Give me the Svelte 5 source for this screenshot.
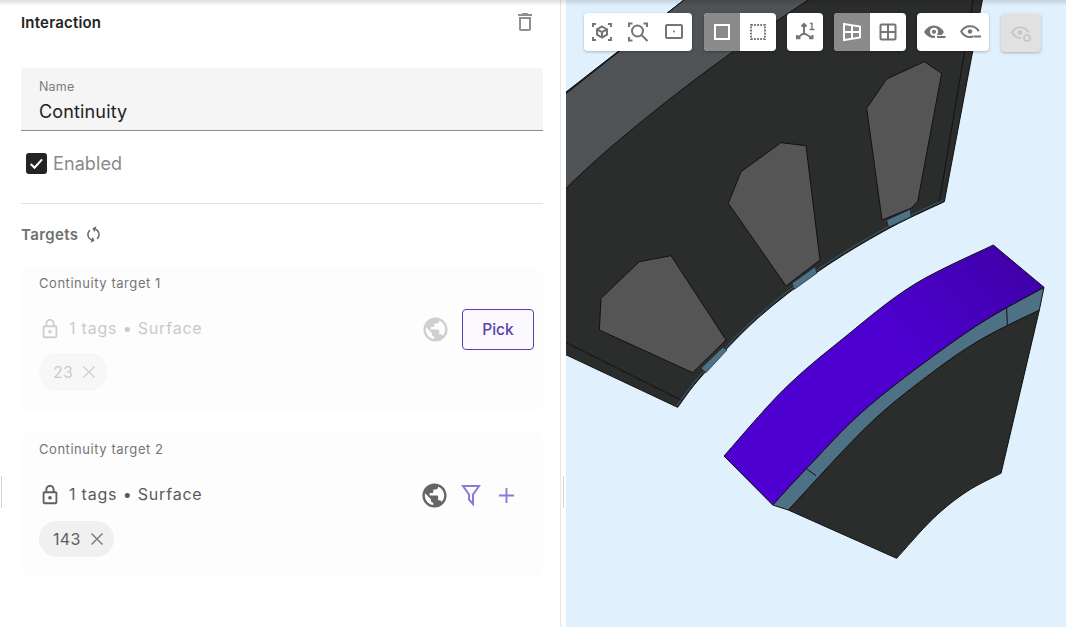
<script lang="ts">
	const icons = {
		trash: 'M6 19c0 1.1.9 2 2 2h8c1.1 0 2-.9 2-2V7H6v12zM8 9h8v10H8V9zm7.5-5l-1-1h-5l-1 1H5v2h14V4h-3.5z',
		sync: 'M12 4V1L8 5l4 4V6c3.31 0 6 2.69 6 6 0 1.01-.25 1.97-.7 2.8l1.46 1.46C19.54 15.03 20 13.57 20 12c0-4.42-3.58-8-8-8zm0 14c-3.31 0-6-2.69-6-6 0-1.01.25-1.97.7-2.8L5.24 7.74C4.46 8.97 4 10.43 4 12c0 4.42 3.58 8 8 8v3l4-4-4-4v3z',
		lock: 'M18 8h-1V6c0-2.76-2.24-5-5-5S7 3.24 7 6v2H6c-1.1 0-2 .9-2 2v10c0 1.1.9 2 2 2h12c1.1 0 2-.9 2-2V10c0-1.1-.9-2-2-2zM9 6c0-1.66 1.34-3 3-3s3 1.34 3 3v2H9V6zm9 14H6V10h12v10zm-6-3c1.1 0 2-.9 2-2s-.9-2-2-2-2 .9-2 2 .9 2 2 2z',
		globe: 'M12 2C6.48 2 2 6.48 2 12s4.48 10 10 10 10-4.48 10-10S17.52 2 12 2zm-1 17.93c-3.95-.49-7-3.85-7-7.93 0-.62.08-1.21.21-1.79L9 15v1c0 1.1.9 2 2 2v1.93zm6.9-2.54c-.26-.81-1-1.39-1.9-1.39h-1v-3c0-.55-.45-1-1-1H8v-2h2c.55 0 1-.45 1-1V7h2c1.1 0 2-.9 2-2v-.41c2.93 1.19 5 4.06 5 7.41 0 2.08-.8 3.97-2.1 5.39z'
	};

	const targets = [
		{ name: 'Continuity target 1', tag: '23', picking: true },
		{ name: 'Continuity target 2', tag: '143', picking: false }
	];

	const pads = [
		'105,895 220,785 315,767 480,1020 380,1118 100,990',
		'487,610 525,515 645,428 720,437 762,780 660,858',
		'902,325 962,237 1075,185 1127,220 1055,605 1035,625 948,660'
	];
	const feet = [
		'405,1105 470,1042 483,1050 420,1118',
		'678,850 748,800 752,820 685,868',
		'962,660 1033,628 1035,650 968,682'
	];

	// catmull-rom through the traced points, returned as path segments
	function curve(pts: number[][]) {
		let d = '';
		for (let i = 0; i < pts.length - 1; i++) {
			const p0 = pts[i - 1] ?? pts[i];
			const p1 = pts[i];
			const p2 = pts[i + 1];
			const p3 = pts[i + 2] ?? p2;
			const c1 = [p1[0] + (p2[0] - p0[0]) / 6, p1[1] + (p2[1] - p0[1]) / 6];
			const c2 = [p2[0] - (p3[0] - p1[0]) / 6, p2[1] - (p3[1] - p1[1]) / 6];
			d += `C${c1[0]} ${c1[1]} ${c2[0]} ${c2[1]} ${p2[0]} ${p2[1]} `;
		}
		return d;
	}

	// arcs traced off the model, in 3x reference coordinates
	const innerArc = curve([[1135, 605], [960, 690], [760, 812], [575, 955], [410, 1125], [335, 1222]]);
	const violetOuter = curve([[72, 678], [250, 480], [430, 325], [640, 165], [880, 45]]);
	const violetInner = curve([[1032, 172], [810, 300], [510, 525], [320, 715], [218, 825]]);
	const stripLower = curve([[265, 840], [500, 590], [680, 440], [840, 330], [1018, 240]]);
	const bottomArc = curve([[903, 730], [800, 785], [700, 865], [590, 985]]);
</script>

<div class="page">
	<section class="panel">
		<div class="head">
			<h1>Interaction</h1>
			<svg class="trash" viewBox="0 0 24 24"><path d={icons.trash} /></svg>
		</div>

		<div class="field">
			<span class="field-label">Name</span>
			<span class="field-value">Continuity</span>
		</div>

		<div class="check">
			<span class="box">
				<svg viewBox="0 0 20 20"><path d="M4.5 10.5l3.6 3.6 7.2-8" /></svg>
			</span>
			Enabled
		</div>

		<hr />

		<div class="targets-title">
			Targets
			<svg viewBox="0 0 24 24"><path d={icons.sync} /></svg>
		</div>

		{#each targets as t}
			<div class="card" class:faded={t.picking}>
				<div class="card-name">{t.name}</div>
				<div class="row">
					<svg class="lock" viewBox="0 0 24 24"><path d={icons.lock} /></svg>
					<span class="summary">1 tags • Surface</span>
					<svg class="globe" viewBox="0 0 24 24"><path d={icons.globe} /></svg>
					{#if t.picking}
						<button class="pick">Pick</button>
					{:else}
						<svg class="filter" viewBox="0 0 20 22"><path d="M2 2h16l-6 8.5V20l-4-4.500V10.500z" /></svg>
						<svg class="plus" viewBox="0 0 18 18"><path d="M9 1v16M1 9h16" /></svg>
					{/if}
				</div>
				<div class="chip">
					{t.tag}
					<svg viewBox="0 0 14 14"><path d="M1.500 1.500l11 11M12.500 1.500l-11 11" /></svg>
				</div>
			</div>
		{/each}
	</section>

	<div class="gutter"></div>

	<section class="viewport">
		<svg class="model" viewBox="0 0 1500 1881" preserveAspectRatio="none">
			<!-- upper part -->
			<path class="edge" fill="#2b2d2d" d="M1250 -5 L1135 605 {innerArc} L-5 1062 V280 L360 -5 Z" />
			<path fill="#4f5355" class="edge" d="M-5 285 L360 -5 H735 Q640 55 480 170 Q300 300 130 445 Q50 515 -5 570 Z" />
			<path class="line" d="M-5 1025 L345 1200" />
			<path class="line" d="M1222 -5 L1195 160 L1120 605" />
			<path class="rim" d="M1135 605 {innerArc}" />
			{#each pads as p}
				<polygon class="edge" fill="#555556" points={p} />
			{/each}
			{#each feet as p}
				<polygon class="thin" fill="#4e7186" points={p} />
			{/each}

			<!-- lower part, traced at its own origin -->
			<g transform="translate(402 690)">
				<path class="edge" fill="#2b2d2d" d="M265 840 {stripLower} L903 730 {bottomArc} Z" />
				<path class="edge" fill="#4e7186" d="M1032 172 {violetInner} L265 840 {stripLower} Z" />
				<path class="line" d="M318 715 L348 737" />
				<path class="line" d="M920 235 L922 285" />
				<path class="edge" fill="url(#violet)" d="M72 678 {violetOuter} L1032 172 {violetInner} Z" />
			</g>
			<defs>
				<linearGradient id="violet" gradientUnits="userSpaceOnUse" x1="300" y1="700" x2="1000" y2="80">
					<stop offset="0.5" stop-color="#4d00cf" />
					<stop offset="1" stop-color="#3f00a6" />
				</linearGradient>
			</defs>
		</svg>

		<div class="tools">
			<div class="group">
				<button aria-label="Zoom to model">
					<svg viewBox="0 0 24 24" class="line-icon">
						<path d="M3 7V4h3M18 4h3v3M21 17v3h-3M6 20H3v-3" />
						<path d="M12 6.500l5 2.800v5.400l-5 2.800-5-2.800V9.300zM7 9.300l5 2.900 5-2.900M12 12.200v5.300" />
					</svg>
				</button>
				<button aria-label="Zoom to selection">
					<svg viewBox="0 0 24 24" class="line-icon">
						<path d="M3 7V3.500h3.500M17.500 3.500H21V7M3 17v3.500h3.500" />
						<circle cx="11.500" cy="11" r="5.500" />
						<path d="M15.500 15l6 6" />
					</svg>
				</button>
				<button aria-label="Frame">
					<svg viewBox="0 0 24 24" class="line-icon">
						<rect x="4" y="5" width="16" height="13" rx="1" />
						<circle class="dot" cx="12" cy="11.500" r="1" />
					</svg>
				</button>
			</div>

			<div class="group">
				<button class="on" aria-label="Solid">
					<svg viewBox="0 0 24 24" class="line-icon"><rect x="5" y="5" width="14" height="14" /></svg>
				</button>
				<button aria-label="Outline">
					<svg viewBox="0 0 24 24" class="line-icon"><rect class="dots" x="5" y="5" width="14" height="14" /></svg>
				</button>
			</div>

			<div class="group">
				<button aria-label="Axes">
					<svg viewBox="0 0 24 24" class="line-icon">
						<path d="M11 13V4M8.500 6.500L11 4l2.500 2.500M11 13l-7 5M4 15v3.200h3.500M11 13l8 5M19.500 15v3.200H16" />
						<path class="i" d="M17 3.500h2v6M16.500 9.500h5" />
					</svg>
				</button>
			</div>

			<div class="group">
				<button class="on" aria-label="Perspective">
					<svg viewBox="0 0 24 24" class="line-icon"><path d="M4 4l16 2.500v11L4 20zM4 12h16M12 5.300v13.400" /></svg>
				</button>
				<button aria-label="Orthographic">
					<svg viewBox="0 0 24 24" class="line-icon"><rect x="4.500" y="4.500" width="15" height="15" rx="1" /><path d="M12 4.500v15M4.500 12h15" /></svg>
				</button>
			</div>

			<div class="group">
				<button aria-label="Hide selected">
					<svg viewBox="0 0 24 24" class="eye">
						<path d="M1 12C3.500 7.500 7.500 5.500 11 5.500c4 0 7.500 2.200 10 6.500-2.500 4-6 6-10 6-4 0-7.500-2-10-6z" />
						<circle class="ring" cx="11" cy="11.800" r="4" />
						<circle cx="11" cy="11.800" r="2.100" />
						<path class="cut" d="M12 17.500h12" />
						<path class="dash" d="M14 17h8.500" />
					</svg>
				</button>
				<button aria-label="Show selected">
					<svg viewBox="0 0 24 24" class="line-icon">
						<path d="M14 16.500c-1 .3-2 .5-3 .5-4 0-7-2.300-8.800-5.500C4 8.300 7 6.200 11 6.200c3.500 0 7 1.800 8.800 5" />
						<circle class="dot" cx="11" cy="11.500" r="2.200" />
						<path d="M14.500 16.500H22" />
					</svg>
				</button>
			</div>

			<div class="group off">
				<button aria-label="Reset visibility" disabled>
					<svg viewBox="0 0 24 24" class="line-icon">
						<path d="M12 17c-4 .3-7-2-9.300-5.500C5 8 8 6.200 11 6.200c3.500 0 6.500 1.800 8.500 5" />
						<circle class="dot" cx="11" cy="11.500" r="2.200" />
						<circle cx="18" cy="17" r="3" />
					</svg>
				</button>
			</div>
		</div>
	</section>

	<div class="top-shade"></div>
	<i class="handle left"></i>
	<i class="handle right"></i>
</div>

<style>
	:global(body) {
		background: #fff;
	}
	.page {
		position: relative;
		display: flex;
		height: 627px;
		overflow: hidden;
		font-family: Inter, 'Noto Sans', sans-serif;
		color: #222;
	}
	.panel {
		width: 561px;
		box-sizing: border-box;
		flex: none;
		padding: 0 17px 0 21px;
		border-right: 1px solid #e6e6e6;
	}
	.gutter {
		width: 5px;
		flex: none;
	}
	.head {
		display: flex;
		align-items: center;
		justify-content: space-between;
		height: 44px;
	}
	.head h1 {
		margin: 0;
		font-size: 15px;
		font-weight: 600;
		letter-spacing: 0.2px;
		color: #232323;
	}
	.trash {
		width: 24px;
		height: 24px;
		margin-right: 6px;
		fill: #8f8f8f;
	}
	.field {
		display: flex;
		flex-direction: column;
		height: 63px;
		box-sizing: border-box;
		margin-top: 24px;
		padding: 11px 18px 0;
		background: #f5f5f5;
		border-bottom: 1px solid #8d8d8d;
		border-radius: 4px 4px 0 0;
	}
	.field-label {
		font-size: 12.500px;
		line-height: 15px;
		letter-spacing: 0.2px;
		color: #7c7c7c;
	}
	.field-value {
		margin-top: 6px;
		font-size: 18px;
		line-height: 24px;
		letter-spacing: 0.15px;
		color: #222;
	}
	.check {
		display: flex;
		align-items: center;
		gap: 6px;
		margin: 21px 0 0 5px;
		height: 22px;
		font-size: 18px;
		letter-spacing: 0.1px;
		color: #8a8a8a;
	}
	.box {
		display: block;
		width: 21px;
		height: 21px;
		border-radius: 3px;
		background: #232323;
	}
	.box svg {
		display: block;
		fill: none;
		stroke: #fff;
		stroke-width: 2;
	}
	hr {
		margin: 29px 0 0;
		border: 0;
		border-top: 1px solid #e4e4e4;
	}
	.targets-title {
		display: flex;
		align-items: center;
		gap: 5px;
		margin-top: 20px;
		height: 20px;
		font-size: 15px;
		font-weight: 600;
		letter-spacing: 0.4px;
		color: #707070;
	}
	.targets-title svg {
		width: 19px;
		height: 19px;
		fill: #6d6d6d;
		transform: rotate(20deg);
	}
	.card {
		margin-top: 22px;
		height: 144px;
		box-sizing: border-box;
		padding: 9px 9px 0 18px;
		background: #fdfdfd;
		border-radius: 8px;
		font-size: 13px;
	}
	.card.faded {
		height: 145px;
	}
	.card + .card {
		margin-top: 21px;
	}
	.card-name {
		line-height: 17px;
		letter-spacing: 0.55px;
		color: #757575;
	}
	.row {
		display: flex;
		align-items: center;
		height: 42px;
		margin-top: 16px;
	}
	.lock {
		width: 22px;
		height: 22px;
		fill: #5f5f5f;
		flex: none;
		margin-right: 8px;
		margin-top: -1px;
	}
	.summary {
		flex: 1;
		font-size: 16px;
		letter-spacing: 0.8px;
		color: #5a5a5a;
		margin-top: -2px;
	}
	.globe {
		width: 29px;
		height: 29px;
		fill: #656565;
		margin-right: 12px;
	}
	.faded .lock,
	.faded .globe {
		fill: #cfcfcf;
	}
	.faded .summary {
		color: #cacaca;
	}
	.pick {
		width: 72px;
		height: 41px;
		box-sizing: border-box;
		border: 1px solid #5b3eb2;
		border-radius: 4px;
		background: #fbf9fe;
		color: #5c40b4;
		font: 500 15.500px Inter, sans-serif;
	}
	.filter {
		width: 20px;
		height: 22px;
		margin-right: 17px;
		fill: none;
		stroke: #8c78d9;
		stroke-width: 2;
	}
	.plus {
		width: 17px;
		height: 17px;
		margin-right: 19px;
		fill: none;
		stroke: #8c78d9;
		stroke-width: 2;
	}
	.chip {
		display: inline-flex;
		align-items: center;
		gap: 9px;
		height: 36px;
		margin-top: 5px;
		padding: 0 10px 0 14px;
		border-radius: 18px;
		background: #f0f0f0;
		font-size: 16px;
		letter-spacing: 0.3px;
		color: #5e5e5e;
	}
	.faded .chip {
		height: 38px;
		margin-top: 3px;
		background: #f7f7f7;
		color: #cbcbcb;
		padding-right: 11px;
	}
	.chip svg {
		width: 14px;
		height: 14px;
		fill: none;
		stroke: #7f7f7f;
		stroke-width: 1.500;
	}
	.faded .chip svg {
		stroke: #d2d2d2;
	}
	.viewport {
		position: relative;
		flex: 1;
		background: #e0f1fd;
		overflow: hidden;
	}
	.model {
		display: block;
		width: 100%;
		height: 100%;
	}
	.edge {
		stroke: #111;
		stroke-width: 3;
		stroke-linejoin: round;
	}
	.thin {
		stroke: #16222a;
		stroke-width: 2;
	}
	.line {
		fill: none;
		stroke: #111;
		stroke-width: 3;
	}
	.rim {
		fill: none;
		stroke: #3d5868;
		stroke-width: 3;
		transform: translate(-3px, -5px);
	}
	.tools {
		position: absolute;
		top: 13px;
		left: 18px;
		display: flex;
		gap: 11px;
	}
	.group {
		display: flex;
		height: 38px;
		border-radius: 4px;
		overflow: hidden;
		background: #fff;
		box-shadow: 0 1px 3px rgba(0, 0, 0, 0.25);
	}
	.group:nth-child(2) {
		margin-left: 1px;
	}
	.group button {
		width: 36px;
		height: 38px;
		padding: 0;
		border: 0;
		background: transparent;
		display: flex;
		align-items: center;
		justify-content: center;
	}
	.group button.on {
		background: #8a8a8a;
	}
	.group.off {
		margin: 1px 0 0 1px;
		background: #e1e1e1;
	}
	.group.off button {
		width: 40px;
	}
	.line-icon {
		width: 24px;
		height: 24px;
		fill: none;
		stroke: #757575;
		stroke-width: 2;
	}
	.on .line-icon {
		stroke: #fff;
	}
	.off .line-icon {
		stroke: #c4c4c4;
		stroke-width: 1.600;
	}
	.line-icon .dot {
		fill: #757575;
		stroke: none;
	}
	.off .line-icon .dot {
		fill: #c4c4c4;
	}
	.line-icon .dots {
		stroke-dasharray: 1.800 1.300;
	}
	.line-icon .i {
		stroke-width: 1.400;
	}
	.eye {
		width: 24px;
		height: 24px;
		fill: #757575;
	}
	.eye .ring {
		fill: #fff;
	}
	.eye .cut {
		fill: none;
		stroke: #fff;
		stroke-width: 5;
	}
	.eye .dash {
		fill: none;
		stroke: #757575;
		stroke-width: 2;
	}
	.top-shade {
		position: absolute;
		inset: 0 0 auto 0;
		height: 6px;
		background: linear-gradient(rgba(0, 0, 0, 0.13), rgba(0, 0, 0, 0));
		pointer-events: none;
	}
	.handle {
		position: absolute;
		top: 476px;
		height: 32px;
		width: 1px;
		background: #d4d4d4;
	}
	.handle.left {
		left: 1px;
	}
	.handle.right {
		left: 563px;
	}
</style>
